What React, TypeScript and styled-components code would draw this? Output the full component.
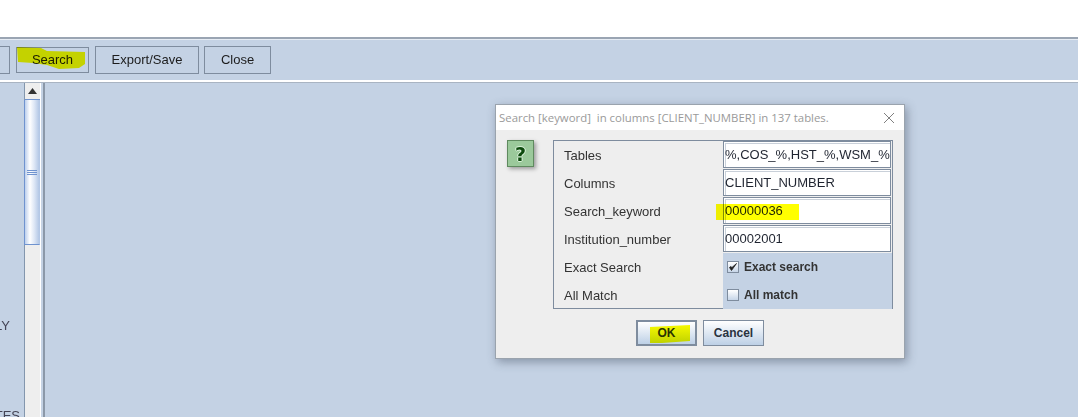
import React from "react"
import styled, { createGlobalStyle } from "styled-components"

const GlobalStyle = createGlobalStyle`
  html, body {
    margin: 0;
    padding: 0;
    width: 1078px;
    height: 417px;
    overflow: hidden;
    background: #ffffff;
  }
  * {
    box-sizing: border-box;
  }
`

const Page = styled.div`
  position: relative;
  width: 1078px;
  height: 417px;
  overflow: hidden;
  display: flex;
  flex-direction: column;
  font-family: "Liberation Sans", Arial, sans-serif;
  font-size: 13px;
  color: #222;
  background: #c4d2e4;
`

const TopBand = styled.div`
  height: 37px;
  flex: none;
  background: #ffffff;
`

const Toolbar = styled.div`
  height: 45px;
  flex: none;
  display: flex;
  align-items: center;
  gap: 6px;
  background: #c4d2e4;
  border-top: 2px solid #9aa5b3;
  box-shadow: inset 0 1px 0 #e6ecf4;
  border-bottom: 2px solid #ffffff;
  position: relative;
`

const BottomEdge = styled.div`
  height: 1px;
  flex: none;
  background: #a9b4c2;
`

const ToolButton = styled.div<{ $width: number; $small?: boolean; $clipped?: boolean; $tight?: boolean }>`
  width: ${(p) => p.$width}px;
  height: ${(p) => (p.$small ? 26 : 28)}px;
  flex: none;
  display: flex;
  align-items: center;
  justify-content: center;
  margin-right: ${(p) => (p.$tight ? -1 : 0)}px;
  border: 1px solid #7e8c9e;
  border-left-width: ${(p) => (p.$clipped ? 0 : 1)}px;
  background: #c4d2e4;
  color: #1c1c1c;
`

const Workspace = styled.div`
  flex: 1;
  min-height: 0;
  display: flex;
`

const SidePane = styled.div`
  width: 24px;
  flex: none;
  overflow: hidden;
  display: flex;
  flex-direction: column;
  padding-top: 235px;
  color: #445;
`

const ClippedText = styled.div<{ $right: number; $top: number }>`
  display: flex;
  justify-content: flex-end;
  white-space: nowrap;
  height: 15px;
  margin-top: ${(p) => p.$top}px;
  padding-right: ${(p) => p.$right}px;
`

const ScrollBar = styled.div`
  width: 16px;
  flex: none;
  display: flex;
  flex-direction: column;
  background: #eeeeee;
  border-left: 1px solid #8396ad;
`

const ScrollUp = styled.div`
  height: 17px;
  flex: none;
  display: flex;
  align-items: center;
  justify-content: center;
  background: #eeeeee;
  border-bottom: 1px solid #6f93cf;
`

const ScrollThumb = styled.div`
  height: 145px;
  flex: none;
  display: flex;
  align-items: center;
  justify-content: center;
  background: linear-gradient(to right, #bccfec 0%, #ffffff 35%, #dfe8f6 65%, #b4c8e6 100%);
  border-left: 1px solid #6f93cf;
  border-right: 1px solid #b4c8e6;
  border-bottom: 1px solid #6f93cf;
  margin-left: -1px;
`

const Grip = styled.div`
  width: 10px;
  height: 5px;
  border-top: 1px solid #6f93cf;
  border-bottom: 1px solid #6f93cf;
  position: relative;
  &::after {
    content: "";
    position: absolute;
    left: 0;
    right: 0;
    top: 1px;
    height: 1px;
    background: #6f93cf;
  }
`

const Divider = styled.div`
  width: 5px;
  flex: none;
  background: #c4d2e4;
  border-left: 1px solid #ffffff;
  border-right: 2px solid #8b98a8;
`

const MainArea = styled.div`
  flex: 1;
  background: #c4d2e4;
`

const Dialog = styled.div`
  position: absolute;
  left: 495px;
  top: 104px;
  width: 410px;
  height: 255px;
  display: flex;
  flex-direction: column;
  background: #eeeeee;
  border: 1px solid #9aa3ad;
  box-shadow: 2px 3px 9px rgba(60, 70, 90, 0.45);
`

const TitleBar = styled.div`
  height: 25px;
  flex: none;
  display: flex;
  align-items: center;
  justify-content: space-between;
  padding: 0 9px 0 3px;
  background: #ffffff;
  color: #9a9a9a;
  font-family: "Open Sans", sans-serif;
  font-size: 11.4px;
  white-space: pre;
`

const DialogBody = styled.div`
  flex: 1;
  display: flex;
  flex-direction: column;
  padding: 10px 11px 0 11px;
`

const FormLine = styled.div`
  display: flex;
  gap: 19px;
`

const HelpIcon = styled.div`
  width: 27px;
  height: 27px;
  flex: none;
  display: flex;
  align-items: center;
  justify-content: center;
  background: #9bc99b;
  border: 1px solid #5f8a5f;
  box-shadow: 2px 2px 4px rgba(0, 0, 0, 0.35);
  color: #0d4a0d;
  font-family: "DejaVu Sans", sans-serif;
  font-size: 19px;
  font-weight: 700;
  text-shadow: 1px 0 0 #d8f0d8, -1px 0 0 #d8f0d8, 0 1px 0 #d8f0d8, 0 -1px 0 #d8f0d8;
`

const FormPanel = styled.div`
  position: relative;
  width: 340px;
  height: 169px;
  display: grid;
  grid-template-columns: 169px 169px;
  grid-template-rows: repeat(6, 28px);
  border: 1px solid #7e8c9e;
`

const FieldLabel = styled.div`
  display: flex;
  align-items: center;
  padding-left: 10px;
  color: #333;
`

const Field = styled.div`
  width: 168px;
  height: 27px;
  display: flex;
  align-items: center;
  padding-left: 1px;
  overflow: hidden;
  white-space: nowrap;
  background: #ffffff;
  border: 1px solid #7e8c9e;
  box-shadow: inset 1px 1px 0 #ffffff, inset 2px 2px 0 #c9d0d9;
  color: #1f2430;
`

const CheckCell = styled.div`
  display: flex;
  align-items: center;
  gap: 5px;
  padding-left: 4px;
  background: #c4d2e4;
  color: #333;
  font-size: 12px;
  font-weight: 700;
`

const CheckBox = styled.div`
  width: 12px;
  height: 12px;
  flex: none;
  display: flex;
  align-items: center;
  justify-content: center;
  border: 1px solid #7e8c9e;
  background: linear-gradient(to bottom, #ffffff, #c6d5e8);
`

const ButtonRow = styled.div`
  display: flex;
  justify-content: center;
  gap: 6px;
  margin-top: 11px;
`

const DialogButton = styled.div<{ $primary?: boolean }>`
  position: relative;
  width: 61px;
  height: 26px;
  display: flex;
  align-items: center;
  justify-content: center;
  border: ${(p) => (p.$primary ? 2 : 1)}px solid #7e8c9e;
  background: linear-gradient(to bottom, #ffffff, #bdd0e6);
  color: #2a3340;
  font-size: 12px;
  font-weight: 700;
`

const Marker = styled.svg<{ $left: number; $top: number }>`
  position: absolute;
  left: ${(p) => p.$left}px;
  top: ${(p) => p.$top}px;
  mix-blend-mode: multiply;
  pointer-events: none;
  overflow: visible;
`

const rows = [
  { label: "Tables", value: "%,COS_%,HST_%,WSM_%" },
  { label: "Columns", value: "CLIENT_NUMBER" },
  { label: "Search_keyword", value: "00000036" },
  { label: "Institution_number", value: "00002001" },
]

const App: React.FC = () => {
  return (
    <Page>
      <GlobalStyle />
      <TopBand />
      <Toolbar>
        <ToolButton $width={10} $clipped />
        <ToolButton $width={73} $small>
          Search
        </ToolButton>
        <ToolButton $width={104} $tight>
          Export/Save
        </ToolButton>
        <ToolButton $width={67}>Close</ToolButton>
      </Toolbar>
      <BottomEdge />
      <Workspace>
        <SidePane>
          <ClippedText $right={14} $top={0}>
            LY
          </ClippedText>
          <ClippedText $right={4} $top={75}>
            TES
          </ClippedText>
        </SidePane>
        <ScrollBar>
          <ScrollUp>
            <svg width="9" height="6" viewBox="0 0 9 6">
              <path d="M4.5 0 L9 6 L0 6 Z" fill="#333" />
            </svg>
          </ScrollUp>
          <ScrollThumb>
            <Grip />
          </ScrollThumb>
        </ScrollBar>
        <Divider />
        <MainArea />
      </Workspace>

      <Marker $left={17} $top={47} width="69" height="22" viewBox="0 0 69 22">
        <path d="M0 0 L24 1 L30 4 L68 5 L68 17 L62 21 L42 22 L30 18 L16 16 L1 15 Z" fill="#ffff00" />
      </Marker>

      <Dialog>
        <TitleBar>
          <span>Search [keyword]  in columns [CLIENT_NUMBER] in 137 tables.</span>
          <svg width="12" height="12" viewBox="0 0 12 12">
            <path d="M1 1 L11 11 M11 1 L1 11" stroke="#808080" strokeWidth="1" fill="none" />
          </svg>
        </TitleBar>
        <DialogBody>
          <FormLine>
            <HelpIcon>?</HelpIcon>
            <FormPanel>
              {rows.map((row) => (
                <React.Fragment key={row.label}>
                  <FieldLabel>{row.label}</FieldLabel>
                  <Field>{row.value}</Field>
                </React.Fragment>
              ))}
              <FieldLabel>Exact Search</FieldLabel>
              <CheckCell>
                <CheckBox>
                  <svg width="10" height="10" viewBox="0 0 10 10">
                    <path d="M1.5 5.5 L3.5 8.5 L8.5 1.5 L4 5.5 L3 4.5 Z" fill="#222" stroke="#222" strokeWidth="0.8" />
                  </svg>
                </CheckBox>
                Exact search
              </CheckCell>
              <FieldLabel>All Match</FieldLabel>
              <CheckCell>
                <CheckBox />
                All match
              </CheckCell>
              <Marker $left={162} $top={62} width="84" height="17" viewBox="0 0 84 17">
                <rect x="0" y="1" width="83" height="16" fill="#ffff00" />
              </Marker>
            </FormPanel>
          </FormLine>
          <ButtonRow>
            <DialogButton $primary>
              OK
              <Marker $left={10} $top={3} width="43" height="18" viewBox="0 0 43 18">
                <path d="M2 2 L42 0 L42 16 L14 18 L2 18 Z" fill="#ffff00" />
              </Marker>
            </DialogButton>
            <DialogButton>Cancel</DialogButton>
          </ButtonRow>
        </DialogBody>
      </Dialog>
    </Page>
  )
}

export default App
